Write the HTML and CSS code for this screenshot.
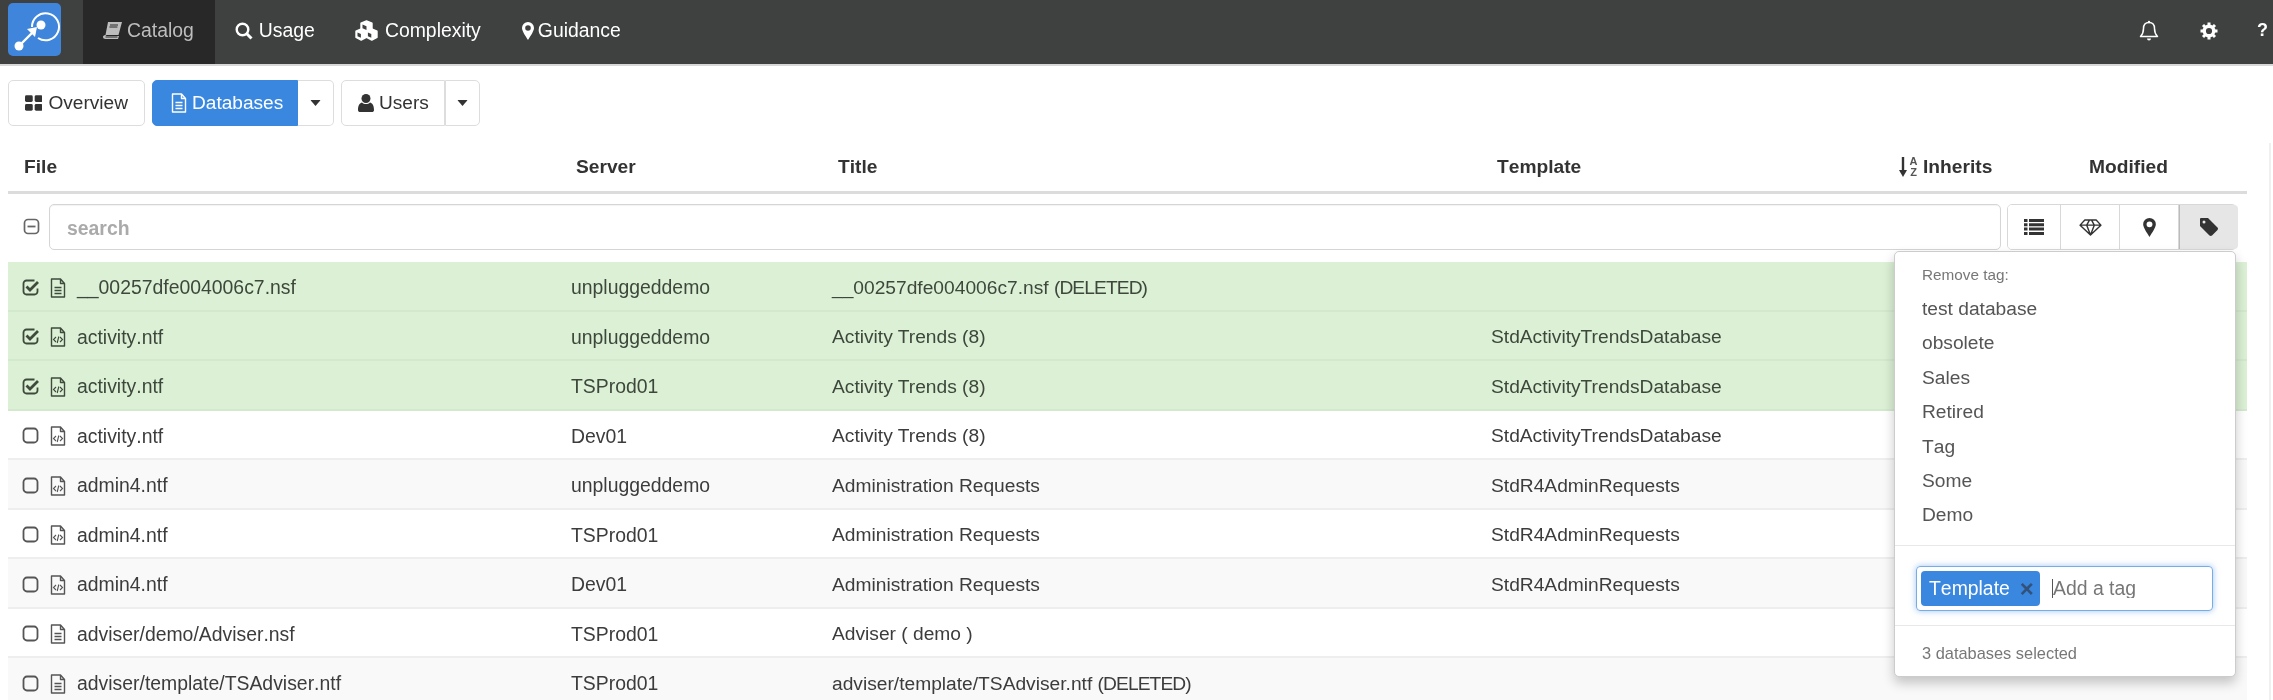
FILE: index.html
```html
<!DOCTYPE html>
<html lang="en">
<head>
<meta charset="utf-8">
<title>Catalog</title>
<link rel="stylesheet" href="styles.css">
</head>
<body>
<svg class="defs" aria-hidden="true">
  <symbol id="i-doc" viewBox="0 0 16 20"><path d="M1.5 1h9l4 4.500V19h-13z M10.500 1v4.500h4" fill="none" stroke="currentColor" stroke-width="1.400" stroke-linejoin="round"/><path d="M4.500 9.500h7M4.500 12.500h7M4.500 15.500h7" stroke="currentColor" stroke-width="1.300"/></symbol>
  <symbol id="i-code" viewBox="0 0 16 20"><path d="M1.500 1h9l4 4.500V19h-13z M10.500 1v4.500h4" fill="none" stroke="currentColor" stroke-width="1.400" stroke-linejoin="round"/><path d="M6 10l-2.500 2.500L6 15M10 10l2.500 2.500L10 15M8.800 9.500l-1.600 6.500" fill="none" stroke="currentColor" stroke-width="1.100"/></symbol>
  <symbol id="i-box" viewBox="0 0 18 18"><rect x="1.500" y="1.500" width="14" height="14" rx="3.500" fill="none" stroke="currentColor" stroke-width="1.800"/></symbol>
  <symbol id="i-check" viewBox="0 0 18 18"><path d="M15.500 9.500v3a3 3 0 0 1-3 3h-8a3 3 0 0 1-3-3v-8a3 3 0 0 1 3-3h8" fill="none" stroke="currentColor" stroke-width="1.800"/><path d="M4.500 7.500l3.500 3.500 8-8" fill="none" stroke="currentColor" stroke-width="2.800"/></symbol>
  <symbol id="i-caret" viewBox="0 0 12 7"><path d="M0 0h12L6 7z" fill="currentColor"/></symbol>
</svg>

<header class="navbar">
  <a class="logo" aria-label="Home">
    <svg viewBox="0 0 53 53" width="53" height="53"><path d="M24 24a13.500 13.500 0 1 1 6 11" fill="none" stroke="#fff" stroke-width="2"/><circle cx="33" cy="22" r="4.500" fill="#fff"/><circle cx="11" cy="43" r="4.500" fill="#fff"/><path d="M11 43l14-14" stroke="#fff" stroke-width="2.400"/><path d="M19 26l10-2-2 10z" fill="#fff"/></svg>
  </a>
  <nav class="nav-links">
    <a class="nav-item active"><svg class="nav-icon book" viewBox="0 0 19 17"><path d="M5 0h14l-3.500 13H2.500z" fill="currentColor"/><path d="M2.500 13c-1.800 0-2.500 1-2.500 2s1 2 2.500 2H15l1-3H3.500" fill="currentColor"/><path d="M7 3h8M6.400 5h8" stroke="#282828" stroke-width="1"/><path d="M2.500 15h12" stroke="#282828" stroke-width="1"/></svg>Catalog</a>
    <a class="nav-item"><svg class="nav-icon" viewBox="0 0 18 18"><circle cx="7.500" cy="7.500" r="5.800" fill="none" stroke="currentColor" stroke-width="2.400"/><path d="M11.800 11.800L16.500 16.500" stroke="currentColor" stroke-width="3"/></svg>Usage</a>
    <a class="nav-item"><svg class="nav-icon wide" viewBox="0 0 23 21"><g fill="currentColor" stroke="currentColor" stroke-width="1.400" stroke-linejoin="round"><path d="M11.500 1l5.500 2.200v6l-5.500 2.300-5.500-2.300v-6z"/><path d="M6.200 9l5.200 2.200v6.200L6.200 20 1 17.400v-6.200z"/><path d="M16.800 9l5.200 2.200v6.200L16.800 20l-5.200-2.600v-6.200z"/></g><path d="M7.500 4.500l4 1.700v3.800l-4-1.700zM2.500 12.500l3.400 1.500v3.800l-3.400-1.600zM12.900 12.500l3.400 1.500v3.800l-3.400-1.600z" fill="#3f4140"/></svg>Complexity</a>
    <a class="nav-item guide"><svg class="nav-icon pin" viewBox="0 0 12 18"><path fill-rule="evenodd" d="M6 0a6 6 0 0 1 6 6c0 3-3.500 8-6 12C3.500 14 0 9 0 6a6 6 0 0 1 6-6zm0 3.200a2.800 2.800 0 1 0 0 5.600 2.800 2.800 0 0 0 0-5.600z" fill="currentColor"/></svg>Guidance</a>
  </nav>
  <div class="nav-right">
    <svg class="bell" viewBox="0 0 20 22"><path d="M10 2.500c-3.500 0-5.500 2.500-5.500 6 0 4-1 6-3 8h17c-2-2-3-4-3-8 0-3.500-2-6-5.500-6z" fill="none" stroke="currentColor" stroke-width="1.500" stroke-linejoin="round"/><path d="M8 18.500a2 2 0 0 0 4 0z" fill="currentColor"/><circle cx="10" cy="2" r="1.200" fill="currentColor"/></svg>
    <svg class="gear" viewBox="0 0 18 18"><circle cx="9" cy="9" r="4.800" fill="none" stroke="currentColor" stroke-width="3.400"/><path d="M9 0.500v17M0.500 9h17M3 3l12 12M15 3L3 15" stroke="currentColor" stroke-width="3" stroke-dasharray="3.200 10.600 3.200"/></svg>
    <span class="help">?</span>
  </div>
</header>

<div class="tabs">
  <button class="btn overview"><svg class="btn-icon" viewBox="0 0 18 16"><g fill="currentColor"><rect width="8" height="7" rx="1.500"/><rect x="10" width="8" height="7" rx="1.500"/><rect y="9" width="8" height="7" rx="1.500"/><rect x="10" y="9" width="8" height="7" rx="1.500"/></g></svg>Overview</button>
  <div class="btn-group">
    <button class="btn primary"><svg class="btn-icon doc" viewBox="0 0 16 20"><use href="#i-doc"/></svg>Databases</button>
    <button class="btn split"><svg class="caret" viewBox="0 0 12 7"><use href="#i-caret"/></svg></button>
  </div>
  <div class="btn-group">
    <button class="btn users"><svg class="btn-icon user" viewBox="0 0 16 18"><circle cx="8" cy="4.500" r="4.500" fill="currentColor"/><path d="M0 16c0-5 2-7 4-7.500 2 2 6 2 8 0 2 .5 4 2.500 4 7.500 0 1.500-1 2-2 2H2c-1 0-2-.5-2-2z" fill="currentColor"/></svg>Users</button>
    <button class="btn split wide-split"><svg class="caret" viewBox="0 0 12 7"><use href="#i-caret"/></svg></button>
  </div>
</div>

<div class="table-head">
  <div>File</div>
  <div>Server</div>
  <div>Title</div>
  <div>Template</div>
  <div class="sorted"><svg class="sort" viewBox="0 0 8 20"><path d="M4 0v15" stroke="currentColor" stroke-width="2.400"/><path d="M0 13h8l-4 7z" fill="currentColor"/></svg><span class="az">A<br>Z</span>Inherits</div>
  <div>Modified</div>
</div>

<div class="toolbar">
  <svg class="minus" viewBox="0 0 18 18"><rect x="1.500" y="1.500" width="14" height="14" rx="3.500" fill="none" stroke="currentColor" stroke-width="1.700"/><path d="M4.500 8.500h8" stroke="currentColor" stroke-width="1.800"/></svg>
  <input class="search" type="text" placeholder="search">
  <div class="views">
    <button class="view"><svg viewBox="0 0 20 16" width="20" height="16"><path d="M0 0h3.500v3H0zM5 0h15v3H5zM0 4.300h3.500v3H0zM5 4.300h15v3H5zM0 8.600h3.500v3H0zM5 8.600h15v3H5zM0 12.900h3.500v3H0zM5 12.900h15v3H5z" fill="currentColor"/></svg></button>
    <button class="view"><svg viewBox="0 0 24 18" width="23" height="17"><path d="M6 1h12l5 5.500L12 17 1 6.500z M1 6.500h22 M8 6.500L12 17l4-10.500L13 1 M8 6.500L11 1" fill="none" stroke="currentColor" stroke-width="1.500" stroke-linejoin="round"/></svg></button>
    <button class="view"><svg viewBox="0 0 12 18" width="13" height="19"><path fill-rule="evenodd" d="M6 0a6 6 0 0 1 6 6c0 3-3.500 8-6 12C3.500 14 0 9 0 6a6 6 0 0 1 6-6zm0 3.200a2.800 2.800 0 1 0 0 5.600 2.800 2.800 0 0 0 0-5.600z" fill="currentColor"/></svg></button>
    <button class="view on"><svg viewBox="0 0 18 18" width="18" height="18"><path fill-rule="evenodd" d="M1 0h7l9.500 9.500a2 2 0 0 1 0 2.500L12 17.500a2 2 0 0 1-2.500 0L0 8V1a1 1 0 0 1 1-1zm3 2.500a1.500 1.500 0 1 0 0 3 1.500 1.500 0 0 0 0-3z" fill="currentColor"/></svg></button>
    <div class="menu">
      <div class="menu-head">Remove tag:</div>
      <ul class="menu-list">
        <li>test database</li>
        <li>obsolete</li>
        <li>Sales</li>
        <li>Retired</li>
        <li>Tag</li>
        <li>Some</li>
        <li>Demo</li>
      </ul>
      <div class="tag-row">
        <div class="tag-box">
          <span class="tag">Template<span class="tag-x">×</span></span>
          <input class="tag-input" type="text" placeholder="Add a tag">
        </div>
      </div>
      <div class="menu-foot">3 databases selected</div>
    </div>
  </div>
</div>

<div class="rows">
  <div class="row sel"><svg class="cb" viewBox="0 0 18 18"><use href="#i-check"/></svg><svg class="ft" viewBox="0 0 16 20"><use href="#i-doc"/></svg><span>__00257dfe004006c7.nsf</span><span>unpluggeddemo</span><span class="k">__00257dfe004006c7.nsf <i class="del">(DELETED)</i></span><span class="k"></span></div>
  <div class="row sel"><svg class="cb" viewBox="0 0 18 18"><use href="#i-check"/></svg><svg class="ft" viewBox="0 0 16 20"><use href="#i-code"/></svg><span>activity.ntf</span><span>unpluggeddemo</span><span class="k">Activity Trends (8)</span><span class="k">StdActivityTrendsDatabase</span></div>
  <div class="row sel"><svg class="cb" viewBox="0 0 18 18"><use href="#i-check"/></svg><svg class="ft" viewBox="0 0 16 20"><use href="#i-code"/></svg><span>activity.ntf</span><span>TSProd01</span><span class="k">Activity Trends (8)</span><span class="k">StdActivityTrendsDatabase</span></div>
  <div class="row"><svg class="cb" viewBox="0 0 18 18"><use href="#i-box"/></svg><svg class="ft" viewBox="0 0 16 20"><use href="#i-code"/></svg><span>activity.ntf</span><span>Dev01</span><span class="k">Activity Trends (8)</span><span class="k">StdActivityTrendsDatabase</span></div>
  <div class="row"><svg class="cb" viewBox="0 0 18 18"><use href="#i-box"/></svg><svg class="ft" viewBox="0 0 16 20"><use href="#i-code"/></svg><span>admin4.ntf</span><span>unpluggeddemo</span><span class="k">Administration Requests</span><span class="k">StdR4AdminRequests</span></div>
  <div class="row"><svg class="cb" viewBox="0 0 18 18"><use href="#i-box"/></svg><svg class="ft" viewBox="0 0 16 20"><use href="#i-code"/></svg><span>admin4.ntf</span><span>TSProd01</span><span class="k">Administration Requests</span><span class="k">StdR4AdminRequests</span></div>
  <div class="row"><svg class="cb" viewBox="0 0 18 18"><use href="#i-box"/></svg><svg class="ft" viewBox="0 0 16 20"><use href="#i-code"/></svg><span>admin4.ntf</span><span>Dev01</span><span class="k">Administration Requests</span><span class="k">StdR4AdminRequests</span></div>
  <div class="row"><svg class="cb" viewBox="0 0 18 18"><use href="#i-box"/></svg><svg class="ft" viewBox="0 0 16 20"><use href="#i-doc"/></svg><span>adviser/demo/Adviser.nsf</span><span>TSProd01</span><span class="k">Adviser ( demo )</span><span class="k"></span></div>
  <div class="row"><svg class="cb" viewBox="0 0 18 18"><use href="#i-box"/></svg><svg class="ft" viewBox="0 0 16 20"><use href="#i-doc"/></svg><span>adviser/template/TSAdviser.ntf</span><span>TSProd01</span><span class="k">adviser/template/TSAdviser.ntf <i class="del">(DELETED)</i></span><span class="k"></span></div>
</div>
<div class="edge"></div>
</body>
</html>
```
FILE: styles.css
```css
* { box-sizing: border-box; }
html, body { margin: 0; height: 700px; overflow: hidden; background: #fff; }
body {
  font-family: "Liberation Sans", Arial, sans-serif;
  font-size: 19.4px;
  font-kerning: none;
  color: #444;
  position: relative;
  filter: blur(0.6px);
}
.defs { position: absolute; width: 0; height: 0; }

/* navbar */
.navbar {
  height: 66px;
  display: flex;
  align-items: stretch;
  background: #3f4140;
  border-bottom: 2px solid #d8d8d8;
  color: #fff;
}
.logo {
  width: 53px;
  height: 53px;
  margin: 3px 0 0 8px;
  background: #3f85dc;
  border-radius: 5px;
  display: block;
}
.logo svg { display: block; }
.nav-links { display: flex; margin-left: 22px; }
.nav-item {
  display: flex;
  align-items: center;
  padding: 0 20px 3px;
  color: #fff;
  font-size: 19.4px;
}
.nav-item.active { background: #282828; color: #bdbdbd; padding: 0 21px 3px 20px; }
.nav-icon { width: 18px; height: 18px; margin-right: 6px; }
.nav-icon.book { width: 19px; height: 17px; margin-right: 5px; }
.nav-icon.wide { width: 23px; height: 21px; margin-right: 7px; }
.nav-icon.pin { width: 12px; height: 18px; margin-right: 4px; }
.nav-item.guide { padding-left: 21px; }
.nav-right { margin-left: auto; display: flex; align-items: center; padding-bottom: 3px; }
.bell { width: 20px; height: 22px; }
.gear { width: 18px; height: 18px; margin-left: 41px; }
.help { font-weight: 700; margin-left: 39px; width: 16px; font-size: 18px; }

/* tabs */
.tabs { display: flex; gap: 7px; padding: 14px 8px 0; height: 60px; }
.btn-group { display: flex; }
.btn {
  height: 46px;
  font: inherit;
  font-size: 19.1px;
  color: #333;
  background: #fff;
  border: 1.5px solid #ddd;
  border-radius: 5px;
  padding: 0 16px;
  display: flex;
  align-items: center;
}
.btn.overview { width: 137px; }
.btn-icon { width: 18px; height: 16px; margin-right: 6px; }
.btn-icon.doc { width: 16px; height: 20px; margin-right: 5px; }
.btn-icon.user { width: 16px; height: 18px; margin-right: 5px; }
.btn.primary {
  background: #3a87e0;
  border-color: #3a87e0;
  color: #fff;
  border-radius: 5px 0 0 5px;
  width: 146px;
  padding: 0 0 0 18px;
}
.btn.users { width: 104px; padding: 0 0 0 16px; border-radius: 5px 0 0 5px; }
.btn.split {
  width: 36px;
  padding: 0;
  justify-content: center;
  border-left: 0;
  border-radius: 0 5px 5px 0;
}
.btn.wide-split { width: 35px; border-left: 1.5px solid #ddd; }
.caret { width: 11px; height: 6px; }

/* table head */
.table-head {
  height: 68px;
  margin: 0 26px 0 8px;
  padding: 16px 0 0 16px;
  display: grid;
  grid-template-columns: 552px 262px 659px 401px 191px 1fr;
  align-items: center;
  font-size: 19.2px;
  font-weight: 700;
  color: #333;
  border-bottom: 3px solid #dcdcdc;
}
.sorted { display: flex; align-items: center; }
.sort { width: 8px; height: 20px; margin-right: 2px; margin-left: 1px; }
.az { font-size: 11px; line-height: 11px; width: 9px; text-align: center; margin-right: 5px; font-weight: 700; color: #555; }

/* toolbar */
.toolbar {
  height: 68px;
  display: flex;
  align-items: flex-start;
  padding: 10px 36px 0 23px;
}
.minus { width: 18px; height: 18px; margin: 14px 8px 0 0; color: #666; flex: none; }
.search {
  flex: 1;
  height: 46px;
  border: 1.5px solid #d5d5d5;
  border-radius: 5px;
  font: inherit;
  font-weight: 700;
  padding: 2px 17px 0;
  outline: 0;
  box-shadow: inset 0 1px 1px rgba(0,0,0,.05);
}
.search::placeholder { color: #aaa; opacity: 1; }
.views {
  position: relative;
  margin-left: 6px;
  width: 230px;
  height: 46px;
  display: grid;
  grid-template-columns: 53px 59px 59px 59px;
  border: 1.5px solid #d8d8d8;
  border-radius: 5px;
}
.view {
  background: #fff;
  border: 0;
  border-right: 1.5px solid #d8d8d8;
  color: #333;
  display: flex;
  align-items: center;
  justify-content: center;
  padding: 0;
  border-radius: 4px 0 0 4px;
}
.view + .view { border-radius: 0; }
.view.on { background: #e6e6e6; border-right: 0; border-left: 1px solid #bbb; border-radius: 0 4px 4px 0; }

/* menu */
.menu {
  position: absolute;
  top: 46px;
  right: 0;
  width: 342px;
  height: 426px;
  background: #fff;
  border: 1px solid #ccc;
  border-radius: 5px;
  box-shadow: 0 6px 12px rgba(0,0,0,.22);
  z-index: 5;
}
.menu-head { font-size: 15.3px; color: #777; padding: 14px 0 0 27px; height: 40px; }
.menu-list { list-style: none; margin: 0; padding: 0 0 0 27px; height: 254px; color: #555; border-bottom: 1.5px solid #e8e8e8; font-size: 19.2px; }
.menu-list li { height: 34.4px; line-height: 34.4px; }
.tag-row { height: 80px; padding: 20px 0 0 21px; border-bottom: 1.5px solid #e8e8e8; }
.tag-box {
  width: 297px;
  height: 45px;
  border: 1.5px solid #76ace8;
  border-radius: 4px;
  box-shadow: 0 0 6px rgba(80,150,230,.55);
  display: flex;
  align-items: center;
  padding-left: 4px;
}
.tag {
  width: 119px;
  height: 35px;
  background: #3a87e0;
  color: #fff;
  border-radius: 4px;
  display: flex;
  align-items: center;
  padding-left: 8px;
  flex: none;
}
.tag-x { margin-left: 10px; color: #33527a; font-weight: 700; font-size: 24px; line-height: 1; }
.tag-input {
  width: 150px;
  height: 19px;
  margin-left: 12px;
  padding: 0;
  border: 0;
  border-left: 1.5px solid #555;
  outline: 0;
  font: inherit;
  line-height: 19px;
}
.tag-input::placeholder { color: #777; opacity: 1; }
.menu-foot { font-size: 16.4px; color: #777; padding: 18px 0 0 27px; }

/* rows */
.rows { margin: 0 26px 0 8px; }
.row {
  height: 49.5px;
  display: grid;
  grid-template-columns: 41px 28px 494px 261px 659px 1fr;
  align-items: center;
  color: #3c3c3c;
  border-bottom: 2px solid #eeeeee;
  white-space: nowrap;
  padding-top: 4px;
}
.row > svg { justify-self: end; }
.row:nth-child(odd) { background: #f9f9f9; }
.row:nth-child(4), .row:nth-child(6), .row:nth-child(8) { background: #fff; }
.row.sel { background: #dbf0d5; border-bottom-color: #d3e9ce; color: #3d473b; }
.k { font-kerning: normal; font-size: 19.2px; }
.del { font-style: normal; letter-spacing: -0.9px; }
.cb { width: 18px; height: 18px; margin-right: 9px; color: #555; }
.ft { width: 16px; height: 20px; margin-right: 11px; color: #555; }
.sel .cb, .sel .ft { color: #3f4a3c; }

.edge { position: absolute; top: 143px; right: 2px; bottom: 0; width: 2px; background: #f0f0f0; }
```
